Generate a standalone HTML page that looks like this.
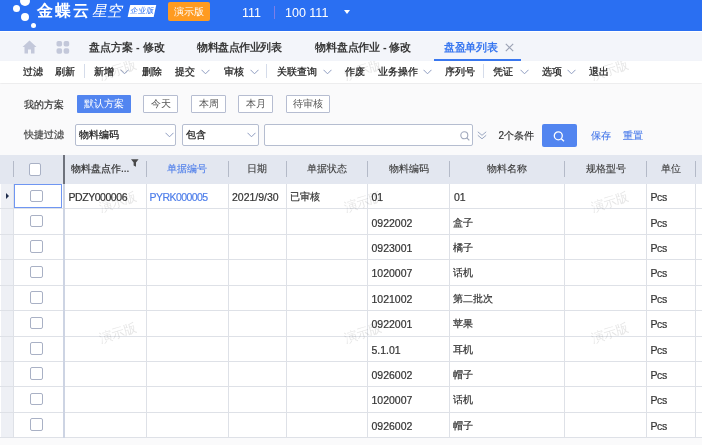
<!DOCTYPE html>
<html><head><meta charset="utf-8">
<style>
*{margin:0;padding:0;box-sizing:border-box}
html,body{width:702px;height:445px;overflow:hidden;background:#FAFAFB;-webkit-font-smoothing:antialiased;font-family:"Liberation Sans",sans-serif;color:#333;position:relative}
.a{position:absolute;white-space:nowrap}
#hdr{position:absolute;left:0;top:0;width:702px;height:31px;background:#2A6FF2}
.dot{position:absolute;background:#fff;border-radius:50%}
#tabs{position:absolute;left:0;top:31px;width:702px;height:30px;background:#F3F5FA;border-top:1px solid #fff}
#tb{position:absolute;left:0;top:61px;width:702px;height:22px;background:#fff;box-shadow:0 1px 2px rgba(0,0,0,.08)}
#flt{position:absolute;left:0;top:84px;width:702px;height:71px;background:#FAFAFB}
.t11{font-size:10px;line-height:12px;color:#222;-webkit-text-stroke:0.25px #222}
.tab{font-size:11px;font-weight:bold;color:#383838;line-height:12px}
.dv{position:absolute;width:1px;background:#D5DCEA}
.chev{position:absolute;width:6px;height:6px;border-right:1px solid #9AA6C0;border-bottom:1px solid #9AA6C0;transform:rotate(45deg)}
.btn{position:absolute;height:18px;border:1px solid #B6BDD1;background:#fff;font-size:10px;line-height:16px;text-align:center;color:#555;border-radius:1px}
.inp{position:absolute;height:22px;border:1px solid #B5BDD0;background:#fff;border-radius:2px}
#grid{position:absolute;left:0;top:155px;width:702px;height:283px;background:#fff}
</style></head><body><div style="position:absolute;left:0;top:0;width:702px;height:445px;will-change:transform">
<div id="hdr">
  <div class="dot" style="left:20px;top:-4px;width:10px;height:10px"></div>
  <div class="dot" style="left:13px;top:5px;width:7px;height:7px"></div>
  <div class="dot" style="left:21px;top:13px;width:8px;height:8px"></div>
  <div class="dot" style="left:31px;top:23px;width:5px;height:5px"></div>
  <div class="a" style="left:37px;top:1.5px;font-size:15.5px;font-weight:bold;color:#fff;line-height:18px;letter-spacing:2px">金蝶云</div>
  <div class="a" style="left:93px;top:1.5px;font-size:15px;font-weight:300;color:#fff;line-height:18px;letter-spacing:0.5px;transform:skewX(-12deg)">星空</div>
  <div class="a" style="left:128.5px;top:5px;width:26px;height:11.5px;background:#fff;transform:skewX(-12deg)"></div>
  <div class="a" style="left:129.5px;top:5px;width:25px;height:11.5px;font-size:7.6px;line-height:11.5px;color:#2A6FF2;text-align:center;transform:skewX(-12deg)">企业版</div>
  <div class="a" style="left:168px;top:2px;width:42px;height:19px;background:#FF9B21;border-radius:2px;color:#fff;font-size:10px;line-height:19px;text-align:center">演示版</div>
  <div class="a" style="left:242px;top:5.5px;font-size:12.5px;line-height:14px;color:#fff">111</div>
  <div class="a" style="left:274px;top:6px;width:1px;height:13px;background:#7C7EE8"></div>
  <div class="a" style="left:285px;top:5.5px;font-size:12.5px;line-height:14px;color:#fff">100 111</div>
  <div class="a" style="left:344px;top:10px;width:0;height:0;border-left:3.5px solid transparent;border-right:3.5px solid transparent;border-top:4px solid #fff"></div>
</div>
<div id="tabs">
  <svg class="a" style="left:22px;top:8px" width="15" height="14" viewBox="0 0 15 14"><path d="M7.5 0.5 L14.5 7 L12.5 7 L12.5 13.5 L9 13.5 L9 9.5 L6 9.5 L6 13.5 L2.5 13.5 L2.5 7 L0.5 7 Z" fill="#C3C8DA"/></svg>
  <svg class="a" style="left:55.5px;top:9px" width="14" height="13" viewBox="0 0 14 13"><rect x="0.5" y="0" width="5.6" height="5.6" rx="1.8" fill="#C3C8DA"/><rect x="7.6" y="0" width="5.6" height="5.6" rx="1.8" fill="#C3C8DA"/><rect x="0.5" y="7.2" width="5.6" height="5.6" rx="1.8" fill="#C3C8DA"/><rect x="7.6" y="7.2" width="5.6" height="5.6" rx="1.8" fill="#C3C8DA"/></svg>
  <div class="a tab" style="left:89px;top:9px">盘点方案 - 修改</div>
  <div class="a tab" style="left:197px;top:9px;letter-spacing:-0.5px">物料盘点作业列表</div>
  <div class="a tab" style="left:315px;top:9px;letter-spacing:-0.15px">物料盘点作业 - 修改</div>
  <div class="a tab" style="left:444px;top:9px;color:#3A78F0;letter-spacing:-0.3px">盘盈单列表</div>
  <svg class="a" style="left:505px;top:11px" width="9" height="9" viewBox="0 0 9 9"><path d="M0.8 0.8 L8.2 8.2 M8.2 0.8 L0.8 8.2" stroke="#9CA3B5" stroke-width="1.2"/></svg>
  <div class="a" style="left:434px;top:27px;width:87px;height:2px;background:#3A78F0"></div>
</div>
<div id="tb">
  <div class="a t11" style="left:22.5px;top:5px">过滤</div>
  <div class="a t11" style="left:55px;top:5px">刷新</div>
  <div class="dv" style="left:83.5px;top:3px;height:14px"></div>
  <div class="a t11" style="left:93.5px;top:5px">新增</div>
  <svg class="a" style="left:120px;top:8px" width="9" height="6" viewBox="0 0 9 6"><path d="M0.5 0.8 L4.5 4.8 L8.5 0.8" fill="none" stroke="#8E9CC0" stroke-width="1"/></svg>
  <div class="a t11" style="left:141.5px;top:5px">删除</div>
  <div class="a t11" style="left:175px;top:5px">提交</div>
  <svg class="a" style="left:201px;top:8px" width="9" height="6" viewBox="0 0 9 6"><path d="M0.5 0.8 L4.5 4.8 L8.5 0.8" fill="none" stroke="#8E9CC0" stroke-width="1"/></svg>
  <div class="a t11" style="left:224px;top:5px">审核</div>
  <svg class="a" style="left:249.5px;top:8px" width="9" height="6" viewBox="0 0 9 6"><path d="M0.5 0.8 L4.5 4.8 L8.5 0.8" fill="none" stroke="#8E9CC0" stroke-width="1"/></svg>
  <div class="dv" style="left:266px;top:3px;height:14px"></div>
  <div class="a t11" style="left:276.5px;top:5px">关联查询</div>
  <svg class="a" style="left:322.5px;top:8px" width="9" height="6" viewBox="0 0 9 6"><path d="M0.5 0.8 L4.5 4.8 L8.5 0.8" fill="none" stroke="#8E9CC0" stroke-width="1"/></svg>
  <div class="a t11" style="left:344.5px;top:5px">作废</div>
  <div class="a t11" style="left:378px;top:5px">业务操作</div>
  <svg class="a" style="left:423px;top:8px" width="9" height="6" viewBox="0 0 9 6"><path d="M0.5 0.8 L4.5 4.8 L8.5 0.8" fill="none" stroke="#8E9CC0" stroke-width="1"/></svg>
  <div class="a t11" style="left:444.5px;top:5px">序列号</div>
  <div class="dv" style="left:483px;top:3px;height:14px"></div>
  <div class="a t11" style="left:493px;top:5px">凭证</div>
  <svg class="a" style="left:520px;top:8px" width="9" height="6" viewBox="0 0 9 6"><path d="M0.5 0.8 L4.5 4.8 L8.5 0.8" fill="none" stroke="#8E9CC0" stroke-width="1"/></svg>
  <div class="a t11" style="left:541.5px;top:5px">选项</div>
  <svg class="a" style="left:567px;top:8px" width="9" height="6" viewBox="0 0 9 6"><path d="M0.5 0.8 L4.5 4.8 L8.5 0.8" fill="none" stroke="#8E9CC0" stroke-width="1"/></svg>
  <div class="a t11" style="left:589px;top:5px">退出</div>
</div>
<div id="flt">
  <div class="a" style="left:24px;top:15px;font-size:10px;line-height:12px;color:#333;-webkit-text-stroke:0.2px #333">我的方案</div>
  <div class="a" style="left:76.5px;top:11px;width:54px;height:18px;background:#5285F0;color:#fff;font-size:10px;line-height:18px;text-align:center;border-radius:1px">默认方案</div>
  <div class="btn" style="left:143px;top:11px;width:35px">今天</div>
  <div class="btn" style="left:191px;top:11px;width:35px">本周</div>
  <div class="btn" style="left:238px;top:11px;width:35px">本月</div>
  <div class="btn" style="left:286px;top:11px;width:44px">待审核</div>
  <div class="a" style="left:24px;top:45px;font-size:10px;line-height:12px;color:#444;-webkit-text-stroke:0.2px #444">快捷过滤</div>
  <div class="inp" style="left:75px;top:40px;width:101px"><div class="a" style="left:3px;top:4px;font-size:10px;line-height:12px;color:#222;-webkit-text-stroke:0.25px #222">物料编码</div>
    <svg class="a" style="left:89px;top:7px" width="9" height="6" viewBox="0 0 9 6"><path d="M0.5 0.8 L4.5 4.8 L8.5 0.8" fill="none" stroke="#8E9CC0" stroke-width="1"/></svg></div>
  <div class="inp" style="left:182px;top:40px;width:77px"><div class="a" style="left:2.5px;top:4px;font-size:10px;line-height:12px;color:#222;-webkit-text-stroke:0.25px #222">包含</div>
    <svg class="a" style="left:64px;top:7px" width="9" height="6" viewBox="0 0 9 6"><path d="M0.5 0.8 L4.5 4.8 L8.5 0.8" fill="none" stroke="#8E9CC0" stroke-width="1"/></svg></div>
  <div class="inp" style="left:264px;top:40px;width:209px">
    <svg class="a" style="left:195px;top:6px" width="10" height="10" viewBox="0 0 10 10"><circle cx="4.3" cy="4.3" r="3.5" fill="none" stroke="#A0A8BC" stroke-width="1.1"/><path d="M6.8 6.8 L9.3 9.3" stroke="#A0A8BC" stroke-width="1.2"/></svg></div>
  <svg class="a" style="left:476.5px;top:47px" width="10" height="9" viewBox="0 0 10 9"><path d="M0.8 0.8 L5 4.3 L9.2 0.8 M0.8 4.3 L5 7.8 L9.2 4.3" fill="none" stroke="#9AA6C0" stroke-width="1"/></svg>
  <div class="a" style="left:498.5px;top:45.5px;font-size:10px;line-height:12px;color:#333;-webkit-text-stroke:0.2px #333">2个条件</div>
  <div class="a" style="left:542px;top:40px;width:35px;height:23px;background:#5285F0;border-radius:2px">
    <svg class="a" style="left:11px;top:7px" width="13" height="11" viewBox="0 0 13 11"><circle cx="5.3" cy="4.8" r="4" fill="none" stroke="#fff" stroke-width="1.3"/><path d="M8.3 7.8 L11 10.3" stroke="#fff" stroke-width="1.4"/></svg></div>
  <div class="a" style="left:590.5px;top:45.5px;font-size:10px;line-height:12px;color:#4A7BEA;-webkit-text-stroke:0.15px #4A7BEA">保存</div>
  <div class="a" style="left:622.5px;top:45.5px;font-size:10px;line-height:12px;color:#4A7BEA;-webkit-text-stroke:0.15px #4A7BEA">重置</div>
</div>
<div id="grid">
<div class="a" style="left:0;top:0;width:702px;height:29px;background:#E3E7F0"></div>
<div class="a" style="left:1px;top:29px;width:12px;height:254px;background:#EEF0F5"></div>
<div class="a" style="left:0;top:53px;width:702px;height:1px;background:#DEE1E7"></div>
<div class="a" style="left:0;top:79px;width:702px;height:1px;background:#DEE1E7"></div>
<div class="a" style="left:0;top:104px;width:702px;height:1px;background:#DEE1E7"></div>
<div class="a" style="left:0;top:130px;width:702px;height:1px;background:#DEE1E7"></div>
<div class="a" style="left:0;top:155px;width:702px;height:1px;background:#DEE1E7"></div>
<div class="a" style="left:0;top:181px;width:702px;height:1px;background:#DEE1E7"></div>
<div class="a" style="left:0;top:206px;width:702px;height:1px;background:#DEE1E7"></div>
<div class="a" style="left:0;top:231px;width:702px;height:1px;background:#DEE1E7"></div>
<div class="a" style="left:0;top:257px;width:702px;height:1px;background:#DEE1E7"></div>
<div class="a" style="left:0;top:282px;width:702px;height:1px;background:#DEE1E7"></div>
<div class="a" style="left:13px;top:29px;width:1px;height:253px;background:#DEE1E7"></div>
<div class="a" style="left:13px;top:6px;width:1px;height:16px;background:#B4BAC8"></div>
<div class="a" style="left:146px;top:29px;width:1px;height:253px;background:#DEE1E7"></div>
<div class="a" style="left:146px;top:6px;width:1px;height:16px;background:#B4BAC8"></div>
<div class="a" style="left:228px;top:29px;width:1px;height:253px;background:#DEE1E7"></div>
<div class="a" style="left:228px;top:6px;width:1px;height:16px;background:#B4BAC8"></div>
<div class="a" style="left:286px;top:29px;width:1px;height:253px;background:#DEE1E7"></div>
<div class="a" style="left:286px;top:6px;width:1px;height:16px;background:#B4BAC8"></div>
<div class="a" style="left:367px;top:29px;width:1px;height:253px;background:#DEE1E7"></div>
<div class="a" style="left:367px;top:6px;width:1px;height:16px;background:#B4BAC8"></div>
<div class="a" style="left:449px;top:29px;width:1px;height:253px;background:#DEE1E7"></div>
<div class="a" style="left:449px;top:6px;width:1px;height:16px;background:#B4BAC8"></div>
<div class="a" style="left:564px;top:29px;width:1px;height:253px;background:#DEE1E7"></div>
<div class="a" style="left:564px;top:6px;width:1px;height:16px;background:#B4BAC8"></div>
<div class="a" style="left:646px;top:29px;width:1px;height:253px;background:#DEE1E7"></div>
<div class="a" style="left:646px;top:6px;width:1px;height:16px;background:#B4BAC8"></div>
<div class="a" style="left:695px;top:29px;width:1px;height:253px;background:#DEE1E7"></div>
<div class="a" style="left:695px;top:6px;width:1px;height:16px;background:#B4BAC8"></div>
<div class="a" style="left:63px;top:0;width:2px;height:29px;background:#6E727C"></div>
<div class="a" style="left:63px;top:29px;width:2px;height:254px;background:#CDD4E3"></div>
<div class="a" style="left:28.5px;top:8px;width:12.5px;height:13px;border:1.3px solid #A9B1C5;border-radius:2px;background:#fff"></div>
<div class="a" style="left:30.2px;top:34.50px;width:12.5px;height:12.5px;border:1.3px solid #A9B1C5;border-radius:2px;background:#fff"></div>
<div class="a" style="left:30.2px;top:59.92px;width:12.5px;height:12.5px;border:1.3px solid #A9B1C5;border-radius:2px;background:#fff"></div>
<div class="a" style="left:30.2px;top:85.34px;width:12.5px;height:12.5px;border:1.3px solid #A9B1C5;border-radius:2px;background:#fff"></div>
<div class="a" style="left:30.2px;top:110.76px;width:12.5px;height:12.5px;border:1.3px solid #A9B1C5;border-radius:2px;background:#fff"></div>
<div class="a" style="left:30.2px;top:136.18px;width:12.5px;height:12.5px;border:1.3px solid #A9B1C5;border-radius:2px;background:#fff"></div>
<div class="a" style="left:30.2px;top:161.60px;width:12.5px;height:12.5px;border:1.3px solid #A9B1C5;border-radius:2px;background:#fff"></div>
<div class="a" style="left:30.2px;top:187.02px;width:12.5px;height:12.5px;border:1.3px solid #A9B1C5;border-radius:2px;background:#fff"></div>
<div class="a" style="left:30.2px;top:212.44px;width:12.5px;height:12.5px;border:1.3px solid #A9B1C5;border-radius:2px;background:#fff"></div>
<div class="a" style="left:30.2px;top:237.86px;width:12.5px;height:12.5px;border:1.3px solid #A9B1C5;border-radius:2px;background:#fff"></div>
<div class="a" style="left:30.2px;top:263.28px;width:12.5px;height:12.5px;border:1.3px solid #A9B1C5;border-radius:2px;background:#fff"></div>
<div class="a" style="left:14px;top:29px;width:48px;height:24px;border:1px solid #6F96F2"></div>
<div class="a" style="left:5.5px;top:38px;width:0;height:0;border-top:3.3px solid transparent;border-bottom:3.3px solid transparent;border-left:3.8px solid #1F2D4D"></div>
<div class="a" style="left:71px;top:8px;font-size:10px;line-height:12px;color:#333;-webkit-text-stroke:0.2px #333">物料盘点作...</div>
<svg class="a" style="left:130.5px;top:3.80px" width="8" height="8" viewBox="0 0 8 8"><path d="M0 0.3 H7.6 L5 3.6 V7.7 L2.6 6.6 V3.6 Z" fill="#4A4A4A"/></svg>
<div class="a" style="left:147px;width:80px;text-align:center;top:8px;font-size:10px;line-height:12px;color:#4F7FEA;-webkit-text-stroke:0.12px #4F7FEA">单据编号</div>
<div class="a" style="left:217px;width:80px;text-align:center;top:8px;font-size:10px;line-height:12px;color:#3C3C3C;-webkit-text-stroke:0.12px #3C3C3C">日期</div>
<div class="a" style="left:286.5px;width:80px;text-align:center;top:8px;font-size:10px;line-height:12px;color:#3C3C3C;-webkit-text-stroke:0.12px #3C3C3C">单据状态</div>
<div class="a" style="left:368.5px;width:80px;text-align:center;top:8px;font-size:10px;line-height:12px;color:#3C3C3C;-webkit-text-stroke:0.12px #3C3C3C">物料编码</div>
<div class="a" style="left:467px;width:80px;text-align:center;top:8px;font-size:10px;line-height:12px;color:#3C3C3C;-webkit-text-stroke:0.12px #3C3C3C">物料名称</div>
<div class="a" style="left:565.5px;width:80px;text-align:center;top:8px;font-size:10px;line-height:12px;color:#3C3C3C;-webkit-text-stroke:0.12px #3C3C3C">规格型号</div>
<div class="a" style="left:631px;width:80px;text-align:center;top:8px;font-size:10px;line-height:12px;color:#3C3C3C;-webkit-text-stroke:0.12px #3C3C3C">单位</div>
<div class="a" style="left:68.5px;top:36.10px;font-size:10.5px;line-height:12px;-webkit-text-stroke:0.2px #333;color:#333;letter-spacing:-0.45px">PDZY000006</div>
<div class="a" style="left:149.5px;top:36.10px;font-size:10.5px;line-height:12px;-webkit-text-stroke:0.2px #4F7FEA;color:#4F7FEA;letter-spacing:-0.55px">PYRK000005</div>
<div class="a" style="left:232px;top:36.10px;font-size:10.5px;line-height:12px;-webkit-text-stroke:0.2px #333;color:#333">2021/9/30</div>
<div class="a" style="left:289.5px;top:36.10px;font-size:9.8px;line-height:12px;-webkit-text-stroke:0.2px #333;color:#333">已审核</div>
<div class="a" style="left:371.5px;top:36.10px;font-size:10.5px;line-height:12px;-webkit-text-stroke:0.2px #333;color:#333">01</div>
<div class="a" style="left:454px;top:36.10px;font-size:10.5px;line-height:12px;-webkit-text-stroke:0.2px #333;color:#333">01</div>
<div class="a" style="left:650.5px;top:36.10px;font-size:10.5px;line-height:12px;-webkit-text-stroke:0.2px #333;color:#333;letter-spacing:-0.4px">Pcs</div>
<div class="a" style="left:371.5px;top:61.52px;font-size:10.5px;line-height:12px;-webkit-text-stroke:0.2px #333;color:#333">0922002</div>
<div class="a" style="left:453px;top:61.52px;font-size:9.8px;line-height:12px;-webkit-text-stroke:0.2px #333;color:#333">盒子</div>
<div class="a" style="left:650.5px;top:61.52px;font-size:10.5px;line-height:12px;-webkit-text-stroke:0.2px #333;color:#333;letter-spacing:-0.4px">Pcs</div>
<div class="a" style="left:371.5px;top:86.94px;font-size:10.5px;line-height:12px;-webkit-text-stroke:0.2px #333;color:#333">0923001</div>
<div class="a" style="left:453px;top:86.94px;font-size:9.8px;line-height:12px;-webkit-text-stroke:0.2px #333;color:#333">橘子</div>
<div class="a" style="left:650.5px;top:86.94px;font-size:10.5px;line-height:12px;-webkit-text-stroke:0.2px #333;color:#333;letter-spacing:-0.4px">Pcs</div>
<div class="a" style="left:371.5px;top:112.36px;font-size:10.5px;line-height:12px;-webkit-text-stroke:0.2px #333;color:#333">1020007</div>
<div class="a" style="left:453px;top:112.36px;font-size:9.8px;line-height:12px;-webkit-text-stroke:0.2px #333;color:#333">话机</div>
<div class="a" style="left:650.5px;top:112.36px;font-size:10.5px;line-height:12px;-webkit-text-stroke:0.2px #333;color:#333;letter-spacing:-0.4px">Pcs</div>
<div class="a" style="left:371.5px;top:137.78px;font-size:10.5px;line-height:12px;-webkit-text-stroke:0.2px #333;color:#333">1021002</div>
<div class="a" style="left:453px;top:137.78px;font-size:9.8px;line-height:12px;-webkit-text-stroke:0.2px #333;color:#333">第二批次</div>
<div class="a" style="left:650.5px;top:137.78px;font-size:10.5px;line-height:12px;-webkit-text-stroke:0.2px #333;color:#333;letter-spacing:-0.4px">Pcs</div>
<div class="a" style="left:371.5px;top:163.20px;font-size:10.5px;line-height:12px;-webkit-text-stroke:0.2px #333;color:#333">0922001</div>
<div class="a" style="left:453px;top:163.20px;font-size:9.8px;line-height:12px;-webkit-text-stroke:0.2px #333;color:#333">苹果</div>
<div class="a" style="left:650.5px;top:163.20px;font-size:10.5px;line-height:12px;-webkit-text-stroke:0.2px #333;color:#333;letter-spacing:-0.4px">Pcs</div>
<div class="a" style="left:371.5px;top:188.62px;font-size:10.5px;line-height:12px;-webkit-text-stroke:0.2px #333;color:#333">5.1.01</div>
<div class="a" style="left:453px;top:188.62px;font-size:9.8px;line-height:12px;-webkit-text-stroke:0.2px #333;color:#333">耳机</div>
<div class="a" style="left:650.5px;top:188.62px;font-size:10.5px;line-height:12px;-webkit-text-stroke:0.2px #333;color:#333;letter-spacing:-0.4px">Pcs</div>
<div class="a" style="left:371.5px;top:214.04px;font-size:10.5px;line-height:12px;-webkit-text-stroke:0.2px #333;color:#333">0926002</div>
<div class="a" style="left:453px;top:214.04px;font-size:9.8px;line-height:12px;-webkit-text-stroke:0.2px #333;color:#333">帽子</div>
<div class="a" style="left:650.5px;top:214.04px;font-size:10.5px;line-height:12px;-webkit-text-stroke:0.2px #333;color:#333;letter-spacing:-0.4px">Pcs</div>
<div class="a" style="left:371.5px;top:239.46px;font-size:10.5px;line-height:12px;-webkit-text-stroke:0.2px #333;color:#333">1020007</div>
<div class="a" style="left:453px;top:239.46px;font-size:9.8px;line-height:12px;-webkit-text-stroke:0.2px #333;color:#333">话机</div>
<div class="a" style="left:650.5px;top:239.46px;font-size:10.5px;line-height:12px;-webkit-text-stroke:0.2px #333;color:#333;letter-spacing:-0.4px">Pcs</div>
<div class="a" style="left:371.5px;top:264.88px;font-size:10.5px;line-height:12px;-webkit-text-stroke:0.2px #333;color:#333">0926002</div>
<div class="a" style="left:453px;top:264.88px;font-size:9.8px;line-height:12px;-webkit-text-stroke:0.2px #333;color:#333">帽子</div>
<div class="a" style="left:650.5px;top:264.88px;font-size:10.5px;line-height:12px;-webkit-text-stroke:0.2px #333;color:#333;letter-spacing:-0.4px">Pcs</div>
</div><div style="position:absolute;left:0;top:61px;width:702px;height:384px;overflow:hidden">
<div class="a" style="left:88px;top:0px;width:60px;height:18px;line-height:18px;text-align:center;font-size:13px;color:rgba(60,60,60,0.13);transform:rotate(-17deg)">演示版</div>
<div class="a" style="left:333px;top:0px;width:60px;height:18px;line-height:18px;text-align:center;font-size:13px;color:rgba(60,60,60,0.13);transform:rotate(-17deg)">演示版</div>
<div class="a" style="left:579.5px;top:0px;width:60px;height:18px;line-height:18px;text-align:center;font-size:13px;color:rgba(60,60,60,0.13);transform:rotate(-17deg)">演示版</div>
<div class="a" style="left:88px;top:131.5px;width:60px;height:18px;line-height:18px;text-align:center;font-size:13px;color:rgba(60,60,60,0.13);transform:rotate(-17deg)">演示版</div>
<div class="a" style="left:333px;top:131.5px;width:60px;height:18px;line-height:18px;text-align:center;font-size:13px;color:rgba(60,60,60,0.13);transform:rotate(-17deg)">演示版</div>
<div class="a" style="left:579.5px;top:131.5px;width:60px;height:18px;line-height:18px;text-align:center;font-size:13px;color:rgba(60,60,60,0.13);transform:rotate(-17deg)">演示版</div>
<div class="a" style="left:88px;top:262.5px;width:60px;height:18px;line-height:18px;text-align:center;font-size:13px;color:rgba(60,60,60,0.13);transform:rotate(-17deg)">演示版</div>
<div class="a" style="left:333px;top:262.5px;width:60px;height:18px;line-height:18px;text-align:center;font-size:13px;color:rgba(60,60,60,0.13);transform:rotate(-17deg)">演示版</div>
<div class="a" style="left:579.5px;top:262.5px;width:60px;height:18px;line-height:18px;text-align:center;font-size:13px;color:rgba(60,60,60,0.13);transform:rotate(-17deg)">演示版</div>
</div>
</div></body></html>
